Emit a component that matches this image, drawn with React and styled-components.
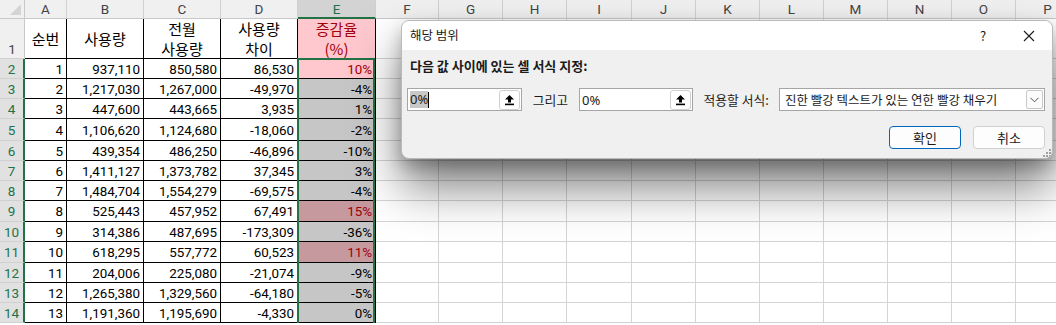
import React from "react"
import styled, { createGlobalStyle, css } from "styled-components"

const GREEN = "#217346"

const GlobalStyle = createGlobalStyle`
  html, body {
    margin: 0;
    padding: 0;
    background: #ffffff;
    overflow: hidden;
  }
`

const Page = styled.div`
  position: relative;
  width: 1056px;
  height: 325px;
  overflow: hidden;
  font-family: "Roboto", "Noto Sans CJK KR", sans-serif;
`

const colWidths = [42, 77, 77, 77, 78, 63, 64, 64, 65, 64, 64, 64, 64, 64, 64, 64]
const rowHeights = [40, 20, 20, 20, 22, 20, 20, 20, 21, 20, 21, 20, 20, 20]
const letters = "ABCDEFGHIJKLMNOP".split("")

const Sheet = styled.div`
  display: grid;
  grid-template-columns: 25px ${colWidths.map((w) => w + "px").join(" ")};
  grid-template-rows: 19px ${rowHeights.map((h) => h + "px").join(" ")};
  width: max-content;
`

const Corner = styled.div`
  position: relative;
  box-sizing: border-box;
  background: #f0f0f0;
  border-right: 1px solid #c8c8c8;
  border-bottom: 1px solid #c8c8c8;

  &::after {
    content: "";
    position: absolute;
    right: 3px;
    bottom: 3px;
    border-left: 11px solid transparent;
    border-bottom: 11px solid #d4d4d4;
  }
`

const ColHeader = styled.div`
  box-sizing: border-box;
  display: flex;
  align-items: center;
  justify-content: center;
  font-size: 13.5px;
  color: #444444;
  background: #f0f0f0;
  border-right: 1px solid #d0d0d0;
  border-bottom: 1px solid #c8c8c8;

  ${(p) =>
    p.$selected &&
    css`
      background: #d3d3d3;
      color: ${GREEN};
      border-bottom: 2px solid ${GREEN};
    `}
`

const RowHeader = styled.div`
  box-sizing: border-box;
  display: flex;
  align-items: ${(p) => (p.$tall ? "flex-end" : "center")};
  justify-content: center;
  padding-bottom: ${(p) => (p.$tall ? "1px" : "0")};
  font-size: 13.5px;
  color: #444444;
  background: #f0f0f0;
  border-right: 1px solid #c8c8c8;
  border-bottom: 1px solid #d0d0d0;

  ${(p) =>
    p.$selected &&
    css`
      background: #e1e1e1;
      color: ${GREEN};
      border-right: 2px solid ${GREEN};
    `}
`

const fills = {
  none: "transparent",
  hot: "#ffc7ce",
  hotSel: "#c6999e",
  sel: "#c6c6c6",
}

const Cell = styled.div`
  position: relative;
  box-sizing: border-box;
  display: flex;
  align-items: center;
  justify-content: ${(p) => (p.$center ? "center" : "flex-end")};
  padding: 1px 3px 0 2px;
  font-size: 13.4px;
  color: ${(p) => (p.$red ? "#a1000a" : "#000000")};
  background: ${(p) => fills[p.$fill || "none"]};
  border-right: 1px solid ${(p) => (p.$table ? "#000000" : "#d4d4d4")};
  border-bottom: 1px solid ${(p) => (p.$table ? "#000000" : "#d4d4d4")};
  white-space: nowrap;

  ${(p) =>
    p.$picked &&
    css`
      &::after {
        content: "";
        position: absolute;
        top: ${p.$first ? "-1px" : "0"};
        bottom: -1px;
        left: -1px;
        right: 0;
        border-left: 2px solid ${GREEN};
        border-right: 2px solid ${GREEN};
        border-top: ${p.$first ? `2px solid ${GREEN}` : "0"};
        pointer-events: none;
      }
    `}
`

const HeadCell = styled(Cell)`
  flex-direction: column;
  justify-content: center;
  align-items: center;
  padding: 0;
  font-family: "Noto Sans CJK KR", sans-serif;
  font-size: 15px;
  line-height: 20px;
`

const heads = [["순번"], ["사용량"], ["전월", "사용량"], ["사용량", "차이"], ["증감율", "(%)"]]

const data = [
  ["1", "937,110", "850,580", "86,530", "10%", "hot"],
  ["2", "1,217,030", "1,267,000", "-49,970", "-4%", "sel"],
  ["3", "447,600", "443,665", "3,935", "1%", "sel"],
  ["4", "1,106,620", "1,124,680", "-18,060", "-2%", "sel"],
  ["5", "439,354", "486,250", "-46,896", "-10%", "sel"],
  ["6", "1,411,127", "1,373,782", "37,345", "3%", "sel"],
  ["7", "1,484,704", "1,554,279", "-69,575", "-4%", "sel"],
  ["8", "525,443", "457,952", "67,491", "15%", "hotSel"],
  ["9", "314,386", "487,695", "-173,309", "-36%", "sel"],
  ["10", "618,295", "557,772", "60,523", "11%", "hotSel"],
  ["11", "204,006", "225,080", "-21,074", "-9%", "sel"],
  ["12", "1,265,380", "1,329,560", "-64,180", "-5%", "sel"],
  ["13", "1,191,360", "1,195,690", "-4,330", "0%", "sel"],
]

/* ---------- dialog ---------- */

const Dialog = styled.div`
  position: absolute;
  left: 401px;
  top: 20px;
  width: 652px;
  height: 139px;
  box-sizing: border-box;
  display: flex;
  flex-direction: column;
  background: #f0f0f0;
  border: 1px solid #b9b9b9;
  border-radius: 8px;
  overflow: hidden;
  box-shadow: 0 28px 48px rgba(0, 0, 0, 0.5), 0 8px 16px rgba(0, 0, 0, 0.22);
  font-family: "Noto Sans CJK KR", sans-serif;
  font-size: 12px;
  color: #1a1a1a;
  z-index: 5;
`

const TitleBar = styled.div`
  height: 29px;
  display: flex;
  align-items: center;
  padding: 0 0 0 8px;
  background: #ffffff;
`

const Title = styled.div`
  flex: 1;
  font-size: 12.5px;
  padding-bottom: 2px;
`

const TitleButton = styled.div`
  width: 46px;
  height: 29px;
  display: flex;
  align-items: center;
  justify-content: center;
  font-size: 13px;
  color: #1a1a1a;
`

const Body = styled.div`
  flex: 1;
  display: flex;
  flex-direction: column;
  padding: 7px 7px 0 5px;
`

const Lead = styled.div`
  font-weight: 700;
  font-size: 13px;
  padding-left: 3px;
  line-height: 18px;
`

const FieldRow = styled.div`
  display: flex;
  align-items: center;
  gap: 11px;
  margin-top: 13px;
`

const RefInput = styled.div`
  box-sizing: border-box;
  width: ${(p) => p.$w}px;
  height: 23px;
  display: flex;
  align-items: center;
  background: #ffffff;
  border: 1px solid #a6a6a6;
  padding: 0 1px 0 2px;
  font-family: "Noto Sans", "Noto Sans CJK KR", sans-serif;
  font-size: 13px;
`

const InputText = styled.span`
  flex: 1;
  display: flex;
  align-items: center;
`

const Highlight = styled.span`
  background: #c8c8c8;
  line-height: 17px;
`

const Caret = styled.span`
  width: 1px;
  height: 16px;
  background: #000;
`

const RefButton = styled.div`
  box-sizing: border-box;
  width: 21px;
  height: 20px;
  display: flex;
  align-items: center;
  justify-content: center;
  background: #ffffff;
  border: 1px solid #cfcfcf;
  border-radius: 3px;
`

const FieldLabel = styled.span`
  font-size: 12.8px;
  white-space: nowrap;
`

const Select = styled.div`
  box-sizing: border-box;
  width: 267px;
  height: 23px;
  margin-left: -1px;
  display: flex;
  align-items: center;
  background: #ffffff;
  border: 1px solid #a6a6a6;
  padding: 0 1px 0 5px;
  font-size: 12.5px;
`

const SelectText = styled.span`
  flex: 1;
  white-space: nowrap;
`

const DropButton = styled.div`
  box-sizing: border-box;
  width: 17px;
  height: 19px;
  display: flex;
  align-items: center;
  justify-content: center;
  border: 1px solid #c8c8c8;
  border-radius: 2px;
  background: #fbfbfb;
`

const ButtonRow = styled.div`
  display: flex;
  justify-content: flex-end;
  gap: 12px;
  margin-top: 15px;
  padding-right: 0;
`

const Button = styled.div`
  box-sizing: border-box;
  width: 72px;
  height: 23px;
  display: flex;
  align-items: center;
  justify-content: center;
  background: #fdfdfd;
  border: 1px solid ${(p) => (p.$primary ? "#0067c0" : "#d0d0d0")};
  border-radius: 4px;
  font-size: 13px;
  color: #1a1a1a;
`

const Grip = styled.svg`
  position: absolute;
  right: 1px;
  bottom: 1px;
`

const RefIcon = () => (
  <svg width="11" height="12" viewBox="0 0 11 12">
    <polygon points="5.5,1 10,5.5 7,5.5 7,8.5 4,8.5 4,5.5 1,5.5" fill="#000" />
    <rect x="1" y="9.6" width="9" height="1.6" fill="#000" />
  </svg>
)

const ChevronDown = () => (
  <svg width="9" height="6" viewBox="0 0 9 6">
    <polyline points="0.5,0.8 4.5,4.8 8.5,0.8" fill="none" stroke="#555" strokeWidth="1" />
  </svg>
)

const CloseIcon = () => (
  <svg width="12" height="12" viewBox="0 0 12 12">
    <path d="M1 1 L11 11 M11 1 L1 11" stroke="#1a1a1a" strokeWidth="1.1" />
  </svg>
)

const ConditionDialog = () => (
  <Dialog>
    <TitleBar>
      <Title>해당 범위</Title>
      <TitleButton>?</TitleButton>
      <TitleButton>
        <CloseIcon />
      </TitleButton>
    </TitleBar>
    <Body>
      <Lead>다음 값 사이에 있는 셀 서식 지정:</Lead>
      <FieldRow>
        <RefInput $w={115}>
          <InputText>
            <Highlight>0%</Highlight>
            <Caret />
          </InputText>
          <RefButton>
            <RefIcon />
          </RefButton>
        </RefInput>
        <FieldLabel>그리고</FieldLabel>
        <RefInput $w={114}>
          <InputText>0%</InputText>
          <RefButton>
            <RefIcon />
          </RefButton>
        </RefInput>
        <FieldLabel>적용할 서식:</FieldLabel>
        <Select>
          <SelectText>진한 빨강 텍스트가 있는 연한 빨강 채우기</SelectText>
          <DropButton>
            <ChevronDown />
          </DropButton>
        </Select>
      </FieldRow>
      <ButtonRow>
        <Button $primary>확인</Button>
        <Button>취소</Button>
      </ButtonRow>
    </Body>
    <Grip width="8" height="8" viewBox="0 0 8 8">
      {[
        [6, 0],
        [6, 3],
        [3, 3],
        [6, 6],
        [3, 6],
        [0, 6],
      ].map(([x, y]) => (
        <rect key={x + "-" + y} x={x} y={y} width="2" height="2" fill="#a0a0a0" />
      ))}
    </Grip>
  </Dialog>
)

const App = () => {
  const blanks = colWidths.length - 5

  return (
    <Page>
      <GlobalStyle />
      <Sheet>
        <Corner />
        {letters.map((l) => (
          <ColHeader key={l} $selected={l === "E"}>
            {l}
          </ColHeader>
        ))}

        <RowHeader $tall>1</RowHeader>
        {heads.map((lines, i) => (
          <HeadCell key={i} $table $fill={i === 4 ? "hot" : "none"} $red={i === 4}>
            {lines.map((t) => (
              <span key={t}>{t}</span>
            ))}
          </HeadCell>
        ))}
        {Array.from({ length: blanks }, (_, i) => (
          <Cell key={"h" + i} />
        ))}

        {data.map((row, r) => (
          <React.Fragment key={r}>
            <RowHeader $selected>{r + 2}</RowHeader>
            {row.slice(0, 4).map((v, c) => (
              <Cell key={c} $table>
                {v}
              </Cell>
            ))}
            <Cell $table $picked $first={r === 0} $fill={row[5]} $red={row[5] !== "sel"}>
              {row[4]}
            </Cell>
            {Array.from({ length: blanks }, (_, i) => (
              <Cell key={"b" + i} />
            ))}
          </React.Fragment>
        ))}
      </Sheet>
      <ConditionDialog />
    </Page>
  )
}

export default App
